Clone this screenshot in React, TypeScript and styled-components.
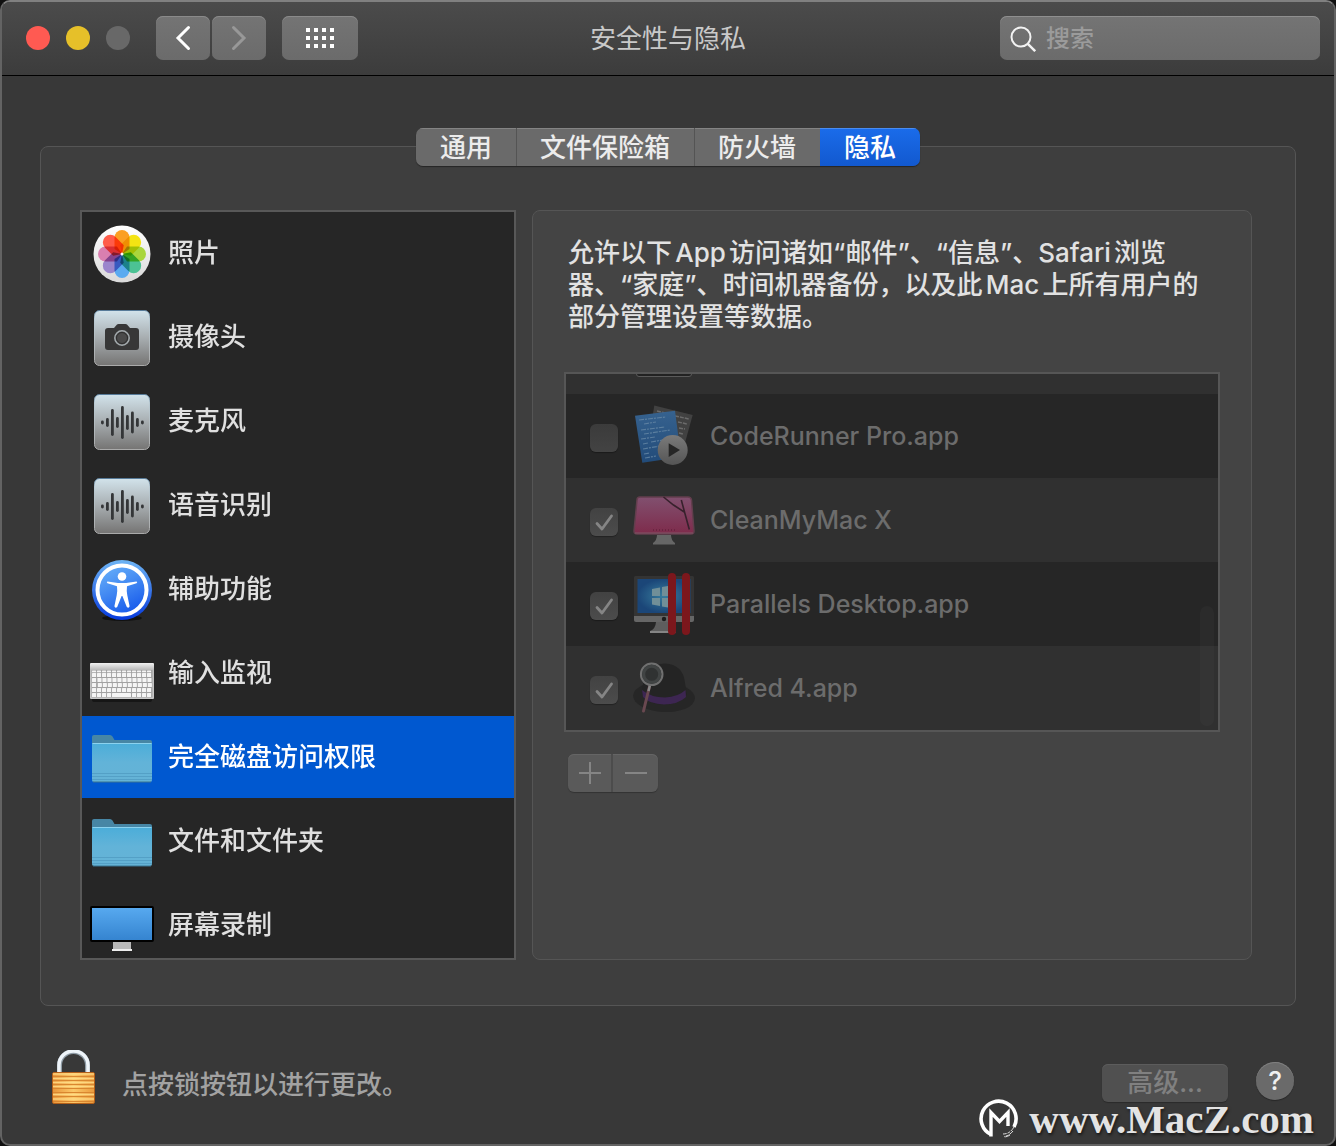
import React from "react";
import styled, { createGlobalStyle } from "styled-components";

const GlobalStyle = createGlobalStyle`
  *, *::before, *::after { box-sizing: border-box; }
  html, body { margin: 0; background: #101010; }
  body, button, input {
    font-family: Inter, "Noto Sans CJK SC", sans-serif;
    font-size: 26px;
    font-weight: 500;
    line-height: 32px;
  }
  button { margin: 0; padding: 0; border: 0; background: none; color: inherit; cursor: default; }
  ul { margin: 0; padding: 0; list-style: none; }
  svg { display: block; flex: none; }
`;

const Window = styled.div`
  position: relative;
  display: flex;
  flex-direction: column;
  height: 100vh;
  min-height: 900px;
  min-width: 1100px;
  border: 2px solid #636363;
  border-top-color: #808080;
  border-radius: 10px;
  background: #383838;
  color: #e2e2e2;
  overflow: hidden;
`;

const TitleBar = styled.header`
  display: grid;
  grid-template-columns: 1fr auto 1fr;
  align-items: center;
  padding: 14px 14px 15px;
  border-bottom: 1px solid #000;
  background: linear-gradient(#4b4b4b, #3c3c3c);
`;

const ToolGroup = styled.div`
  display: flex;
  align-items: center;
`;

const Lights = styled.div`
  display: flex;
  gap: 16px;
  margin: 0 26px 0 10px;
`;

const Light = styled.button<{ $color: string }>`
  width: 24px;
  height: 24px;
  border-radius: 50%;
  background: ${(p) => p.$color};
`;

const ToolButton = styled.button<{ $wide?: boolean }>`
  display: grid;
  place-items: center;
  width: ${(p) => (p.$wide ? 76 : 54)}px;
  height: 44px;
  margin-left: ${(p) => (p.$wide ? 16 : 0)}px;
  margin-right: ${(p) => (p.$wide ? 0 : 2)}px;
  border-radius: 7px;
  background: linear-gradient(#747474, #6b6b6b);
  box-shadow: inset 0 1px 0 #8a8a8a;
  &:nth-of-type(2) { margin-right: 0; }
`;

const Title = styled.h1`
  margin: 0;
  padding-top: 2px;
  font-size: 26px;
  font-weight: 400;
  line-height: 32px;
  color: #c9c9c9;
`;

const Search = styled.label`
  justify-self: end;
  display: flex;
  align-items: center;
  gap: 10px;
  width: 320px;
  height: 44px;
  padding: 2px 10px 0;
  border-radius: 7px;
  background: linear-gradient(#747474, #6b6b6b);
  box-shadow: inset 0 1px 0 #8f8f8f;
`;

const SearchInput = styled.input`
  flex: 1;
  min-width: 0;
  padding: 0;
  border: 0;
  outline: 0;
  background: none;
  color: #eee;
  font-size: 24px;
  &::placeholder { color: #9b9b9b; opacity: 1; }
`;

const Main = styled.main`
  flex: 1;
  min-height: 0;
  display: flex;
  flex-direction: column;
  padding: 52px 38px 0;
`;

const Tabs = styled.div`
  position: relative;
  align-self: center;
  display: flex;
  margin-bottom: -20px;
  border-radius: 7px;
  box-shadow: 0 1px 1px rgba(0, 0, 0, 0.4);
  overflow: hidden;
`;

const Tab = styled.button<{ $active?: boolean; $divided?: boolean }>`
  height: 38px;
  padding: 2px 24px 0;
  color: ${(p) => (p.$active ? "#fff" : "#ececec")};
  background: ${(p) => (p.$active ? "linear-gradient(#1a6cea, #1259cf)" : "#6a6a6a")};
  box-shadow: ${(p) => (p.$divided ? "inset 1px 0 0 #545454, " : "")}inset 0 1px 0 ${(p) => (p.$active ? "#4a8cf0" : "#848484")};
`;

const Box = styled.section`
  flex: 1;
  min-height: 0;
  display: grid;
  grid-template-columns: 436px 1fr;
  gap: 16px;
  padding: 63px 43px 45px 39px;
  border: 1px solid #555;
  border-radius: 8px;
  background: #3e3e3e;
`;

const Sidebar = styled.ul`
  display: flex;
  flex-direction: column;
  gap: 2px;
  min-height: 0;
  border: 2px solid #585858;
  background: #262626;
  overflow-y: auto;
  scrollbar-width: none;
`;

const Category = styled.button<{ $selected?: boolean }>`
  display: flex;
  align-items: center;
  gap: 14px;
  width: 100%;
  height: 82px;
  padding: 2px 8px 0;
  text-align: left;
  color: ${(p) => (p.$selected ? "#fff" : "#e0e0e0")};
  background: ${(p) => (p.$selected ? "#0058d0" : "transparent")};
`;

const CategoryName = styled.span`
  padding-bottom: 2px;
`;

const Pane = styled.section`
  min-width: 0;
  padding: 26px 31px;
  border: 1px solid #555;
  border-radius: 8px;
  background: #444;
`;

const Description = styled.p`
  margin: 0 0 39px;
  padding: 0 4px;
  text-autospace: normal;
`;

const AppList = styled.ul`
  position: relative;
  border: 2px solid #565656;
  background: #303030;
`;

const PeekRow = styled.li`
  height: 20px;
  padding-left: 66px;
`;

const AppRow = styled.li`
  height: 84px;
  &:nth-child(even) { background: #262626; }
`;

const AppLabel = styled.label`
  display: flex;
  align-items: center;
  height: 84px;
  padding-left: 24px;
  color: #6c6c6c;
`;

const CheckWrap = styled.span`
  display: grid;
  width: 28px;
  height: 28px;
  margin: 4px 14px 0 0;
  & > * { grid-area: 1 / 1; }
`;

const CheckInput = styled.input`
  appearance: none;
  width: 28px;
  height: 28px;
  margin: 0;
  border-radius: 6px;
  background: linear-gradient(#3b3b3b, #434343);
  box-shadow: 0 1px 1px rgba(0, 0, 0, 0.3);
  &:checked { background: linear-gradient(#424242, #4c4c4c); }
`;

const AppName = styled.span`
  margin-left: 14px;
  font-size: 25px;
`;

const Thumb = styled.div`
  position: absolute;
  right: 4px;
  bottom: 4px;
  width: 14px;
  height: 120px;
  border-radius: 7px;
  background: rgba(255, 255, 255, 0.025);
`;

const EditButtons = styled.div`
  display: inline-flex;
  margin: 22px 0 0 4px;
  border-radius: 6px;
  background: #5a5a5a;
  box-shadow: inset 0 1px 0 #656565, 0 1px 1px rgba(0, 0, 0, 0.25);
`;

const EditButton = styled.button`
  display: grid;
  place-items: center;
  width: 45px;
  height: 38px;
  &:first-child { border-right: 2px solid #4c4c4c; }
`;

const Footer = styled.footer`
  display: flex;
  align-items: center;
  padding: 44px 38px 28px 48px;
  color: #a2a2a2;
`;

const LockHint = styled.span`
  flex: 1;
  margin-left: 22px;
  padding-top: 4px;
`;

const Advanced = styled.button`
  width: 126px;
  height: 38px;
  border-radius: 6px;
  color: #808080;
  background: #505050;
  box-shadow: inset 0 1px 0 #5c5c5c, 0 1px 1px rgba(0, 0, 0, 0.25);
`;

const Help = styled.button`
  display: grid;
  place-items: center;
  width: 38px;
  height: 38px;
  margin: 0 2px 4px 28px;
  border-radius: 50%;
  color: #f0f0f0;
  background: #6a6a6a;
  box-shadow: inset 0 1px 0 #808080, 0 1px 1px rgba(0, 0, 0, 0.3);
`;

const Watermark = styled.div`
  position: absolute;
  right: 20px;
  bottom: 2px;
  display: flex;
  align-items: center;
  gap: 10px;
  color: #e3e3e3;
  font: 700 41px/46px "Liberation Serif", serif;
  text-shadow: 1px 2px 3px rgba(0, 0, 0, 0.6);
  pointer-events: none;
`;

const Icon64 = ({ children }: { children: React.ReactNode }) => (
  <svg width="64" height="64" viewBox="0 0 64 64" fill="none" aria-hidden="true">{children}</svg>
);

const petals = ["#fb9f22", "#f4e413", "#a9d63c", "#4cc294", "#5aaaf0", "#9b86cc", "#d97fb0", "#ff5c4a"];

const PhotosIcon = () => (
  <Icon64>
    <defs>
      <linearGradient id="photoBg" x1="0" y1="0" x2="0" y2="1">
        <stop stopColor="#fff" /><stop offset="1" stopColor="#d9d9d9" />
      </linearGradient>
    </defs>
    <circle cx="32" cy="32" r="28.5" fill="url(#photoBg)" />
    <g style={{ isolation: "isolate" }}>
      {petals.map((c, i) => (
        <path key={c} d="M24.500 27V15.500a7.500 7.500 0 0 1 15 0V27L32 32Z" fill={c}
          transform={`rotate(${i * 45} 32 32)`} style={{ mixBlendMode: "multiply" }} />
      ))}
    </g>
    <circle cx="32" cy="32" r="1.5" fill="#fff" />
  </Icon64>
);

const Plate = () => (
  <>
    <defs>
      <linearGradient id="plate" x1="0" y1="0" x2="0" y2="1">
        <stop stopColor="#d2e3eb" /><stop offset=".5" stopColor="#a7adb0" /><stop offset="1" stopColor="#757473" />
      </linearGradient>
      <linearGradient id="plateEdge" x1="0" y1="0" x2="0" y2="1">
        <stop stopColor="#577b99" /><stop offset=".15" stopColor="#b9cad3" /><stop offset="1" stopColor="#aaa" />
      </linearGradient>
    </defs>
    <rect x="4.5" y="4.5" width="55" height="55" rx="5" fill="url(#plate)" stroke="url(#plateEdge)" />
  </>
);

const CameraIcon = () => (
  <Icon64>
    <Plate />
    <path d="M18 22h6l3-3.5q.5-.5 1.500-.5h7q1 0 1.500.5L40 22h6a3 3 0 0 1 3 3v16a3 3 0 0 1-3 3H18a3 3 0 0 1-3-3V25a3 3 0 0 1 3-3Z" fill="#373737" />
    <circle cx="32" cy="32" r="7.200" fill="#4a4a4a" stroke="#a3aaad" strokeWidth="1.500" />
    <circle cx="32" cy="32" r="5.500" stroke="#2c2c2c" strokeWidth="1" />
  </Icon64>
);

const bars = [4, 9, 27, 11, 33, 15, 22, 9, 4];

const VoiceIcon = () => (
  <Icon64>
    <Plate />
    {bars.map((h, i) => (
      <rect key={i} x={11 + i * 5} y={32.5 - h / 2} width="2.800" height={h} rx="1.400" fill="#343638" />
    ))}
  </Icon64>
);

const AccessIcon = () => (
  <Icon64>
    <defs>
      <linearGradient id="acc" x1="0" y1="0" x2=".5" y2="1">
        <stop stopColor="#6db5fa" /><stop offset=".5" stopColor="#468df3" /><stop offset="1" stopColor="#1c5fec" />
      </linearGradient>
      <linearGradient id="accRim" x1="0" y1="0" x2="0" y2="1">
        <stop stopColor="#6eb5f5" /><stop offset="1" stopColor="#0639dc" />
      </linearGradient>
    </defs>
    <ellipse cx="32" cy="60" rx="20" ry="3" fill="#111" />
    <circle cx="32" cy="32" r="30" fill="url(#accRim)" />
    <circle cx="32" cy="32" r="24.500" fill="url(#acc)" stroke="#fff" strokeWidth="4" />
    <circle cx="32" cy="18.500" r="4.300" fill="#fff" />
    <path d="M17.500 23.500 28 25h8l10.500-1.500q1.500.6 0 1.800L37 28.300q-.6 4 .3 9l2.300 11q-.6 2.200-2.800.8L32.400 38h-.8L27.200 49.100q-2.200 1.400-2.800-.8l2.300-11q.9-5 .3-9L17.500 25.300q-1.500-1.200 0-1.800Z" fill="#fff" />
  </Icon64>
);

const KeyboardIcon = () => (
  <Icon64>
    <defs>
      <linearGradient id="kb" x1="0" y1="0" x2="0" y2="1">
        <stop stopColor="#f2f2f2" /><stop offset=".18" stopColor="#bdbdbd" /><stop offset="1" stopColor="#c9c9c9" />
      </linearGradient>
    </defs>
    <rect x="2" y="55" width="60" height="5" rx="2" fill="#161616" />
    <rect x="0" y="21" width="64" height="36" rx="1" fill="url(#kb)" />
    <rect x="1.500" y="28" width="61" height="27.500" fill="#a2a2a2" />
    {[0, 1, 2, 3, 4, 5].map((r) =>
      Array.from({ length: 12 }, (_, c) => {
        if (r === 5 && c > 4 && c < 8) return null;
        const space = r === 5 && c === 4;
        return (
          <rect key={`${r}-${c}`} x={2 + c * 5 + (r === 2 ? 0.8 : r === 3 ? 1.6 : 0) * (c ? 0.5 : 0)} y={r === 0 ? 28.5 : 26 + r * 5}
            width={space ? 19 : 4.1} height={r === 0 ? 1.8 : 3.9} rx=".5" fill="#f5f5f5" />
        );
      })
    )}
  </Icon64>
);

const FolderIcon = () => (
  <Icon64>
    <defs>
      <linearGradient id="fold" x1="0" y1="0" x2="0" y2="1">
        <stop stopColor="#4badd9" /><stop offset=".5" stopColor="#62b3d8" /><stop offset="1" stopColor="#65b3d6" />
      </linearGradient>
    </defs>
    <path d="M2 20V11q0-2 2-2h16q1.500 0 2.500 1.500L24.500 14H60q2 0 2 2v5Z" fill="#4786a5" />
    <path d="M2 18q0-1 1-1h58q1 0 1 1v36q0 2-2 2H4q-2 0-2-2Z" fill="url(#fold)" />
    <path d="M2.500 17.500h59" stroke="#8bd2ef" />
    <path d="M2 47.500h60M2 50.500h60M2 53.500h60" stroke="#4d99bf" strokeOpacity=".7" />
    <path d="M3 56h58" stroke="#387391" />
  </Icon64>
);

const ScreenIcon = () => (
  <Icon64>
    <defs>
      <linearGradient id="scr" x1="0" y1="0" x2="0" y2="1">
        <stop stopColor="#58aaf0" /><stop offset="1" stopColor="#3483cf" />
      </linearGradient>
    </defs>
    <path d="M23 48h18v7H23z" fill="#b9b9b9" />
    <path d="M22 55h20v2H22z" fill="#eee" />
    <rect x="1" y="13" width="62" height="34" rx="1" fill="url(#scr)" stroke="#000" strokeWidth="2" />
  </Icon64>
);

const CodeRunnerIcon = () => (
  <Icon64>
    <defs>
      <linearGradient id="sheet" x1="0" y1="0" x2="0" y2="1">
        <stop stopColor="#36628f" /><stop offset="1" stopColor="#224b79" />
      </linearGradient>
      <linearGradient id="play" x1="0" y1="0" x2="0" y2="1">
        <stop stopColor="#7a7a7a" /><stop offset="1" stopColor="#555" />
      </linearGradient>
    </defs>
    <path d="M22.300 1.500 60.700 11 51 46 16 40Z" fill="#414141" />
    <path d="m25 7 13 3m5 2 14 3m-11 3 9 2m-8 4 6 1m-6 4 4 1" stroke="#6b6b6b" strokeWidth="1.500" strokeDasharray="4 1" />
    <path d="M3 11.700 43 6.700 49 53 10.300 58.700Z" fill="url(#sheet)" />
    <path d="m7 16 27-3M12 20l12-2M9 26l24-3M12 30l26-4M9 35l14-2M11 40l5-1m3-1 12-2M11 45l17-3M12 50l6-1m-5 5 11-2" stroke="#6587a5" strokeWidth="1.200" strokeOpacity=".8" strokeDasharray="5 1 2 1" />
    <circle cx="40.700" cy="46" r="15" fill="url(#play)" />
    <path d="M36.700 39.300v13.700L48 46Z" fill="#262626" />
  </Icon64>
);

const CleanIcon = () => (
  <Icon64>
    <defs>
      <linearGradient id="pink" x1="0" y1="0" x2="0" y2="1">
        <stop stopColor="#81506f" /><stop offset="1" stopColor="#7e2b4b" />
      </linearGradient>
    </defs>
    <path d="M25 47h14q0 5 4 8v1.500H21V55q4-3 4-8Z" fill="#666" />
    <path d="M8 9h48q3 0 3.500 3L62 43q0 3-3 3H5q-3 0-3-3L5 12q0-3 3-3Z" fill="url(#pink)" stroke="#633e4d" strokeWidth="1.500" />
    <path d="M3 45h58" stroke="#805868" />
    <path d="m31.500 9 10 8 11.500 7.500M49.300 12l3.500 13 4.500 16.500" stroke="#37212c" strokeWidth="1.600" />
    <path d="M21 42h22" stroke="#561b35" strokeDasharray="1 2" />
  </Icon64>
);

const ParallelsIcon = () => (
  <Icon64>
    <defs>
      <radialGradient id="win"><stop stopColor="#397e9e" /><stop offset="1" stopColor="#1b4678" /></radialGradient>
    </defs>
    <path d="M24 50h16q0 5 4 8v3H18v-2q5.500-2 6-9Z" fill="#5e5e5e" />
    <path d="M18 60h24" stroke="#858585" strokeWidth="2" />
    <rect x="2" y="4" width="60" height="45.500" rx="1.500" fill="#343434" />
    <path d="M2 44h60v4q0 2-2 2H4q-2 0-2-2Z" fill="#666" />
    <rect x="5.500" y="7" width="53" height="34" fill="url(#win)" />
    <circle cx="32" cy="47" r="2.200" fill="#1c1c1c" />
    <path d="m20 17 8-1.500v8.500h-8ZM30 15l9-1.500V24h-9ZM20 26h8v8l-8-1.500ZM30 26h9v10l-9-1.500Z" fill="#718f98" />
    <rect x="36" y="1" width="8" height="62" rx="4" fill="#7c171c" />
    <rect x="50" y="1" width="8" height="62" rx="4" fill="#7c171c" />
  </Icon64>
);

const AlfredIcon = () => (
  <Icon64>
    <ellipse cx="32" cy="41" rx="31" ry="15" fill="#262626" transform="rotate(3 32 41)" />
    <path d="M10 37Q11 8 33 7.500q18 1 20 19l2 12q-8 10-24 10-15 0-21-11Z" fill="#242424" />
    <path d="M10 34q9 7.500 23 7.500Q46 41 53.500 34l.5 7q-8 7.500-22 7.500Q17 48 11 41Z" fill="#3d2652" />
    <path d="M17.500 30.500 11.500 55" stroke="#694850" strokeWidth="3" strokeLinecap="round" />
    <path d="m18 29-1.500 6" stroke="#888" strokeWidth="2.500" />
    <circle cx="19.700" cy="18.300" r="10.800" fill="#393b3b" stroke="#707070" strokeWidth="2" />
    <circle cx="19.700" cy="18.300" r="8" fill="#303232" stroke="#414444" strokeWidth="3" />
  </Icon64>
);

const LockIcon = () => (
  <svg width="50" height="66" viewBox="0 0 50 66" fill="none" aria-hidden="true">
    <defs>
      <linearGradient id="brass" x1="0" y1="0" x2="1" y2="0">
        <stop stopColor="#e9963a" /><stop offset=".5" stopColor="#fbc868" /><stop offset="1" stopColor="#ea9a3c" />
      </linearGradient>
    </defs>
    <path d="M9.500 24V15.500a14 14 0 0 1 28 0V24" stroke="#8e9ba5" strokeWidth="5" />
    <path d="M9 24V15a14.500 14 0 0 1 29 0V24" stroke="#eef4f9" strokeWidth="3.500" />
    <rect x="2.500" y="22.500" width="42" height="31" rx="1.500" fill="url(#brass)" stroke="#b4601a" />
    <path d="M3 24h41M3 28.500h41M3 32.500h41M3 36.500h41M3 44.500h41M3 49h41" stroke="#ffe08c" strokeWidth="1.300" strokeOpacity=".8" />
    <path d="M3 26.500h41M3 30.500h41M3 34.500h41M3 38.500h41M3 42.500h41M3 46.500h41M3 51.500h41" stroke="#d98630" strokeWidth="1.100" />
  </svg>
);

const MacZLogo = () => (
  <svg width="40" height="40" viewBox="0 0 40 40" fill="none" aria-hidden="true">
    <path d="M12 35.500A17.500 17.500 0 1 1 35 28" stroke="#fff" strokeWidth="3.600" />
    <path d="M12 37.500V13.500l8.500 9 8.500-9V27" stroke="#fff" strokeWidth="3.400" />
    <path d="M35 28q-4 7-11 7M34 32q-4 5-9 5.500M31 36q-3 2-6 2" stroke="#ddd" strokeWidth="1" strokeDasharray="5 1 3 1" />
  </svg>
);

const categories = [
  { name: "照片", Icon: PhotosIcon },
  { name: "摄像头", Icon: CameraIcon },
  { name: "麦克风", Icon: VoiceIcon },
  { name: "语音识别", Icon: VoiceIcon },
  { name: "辅助功能", Icon: AccessIcon },
  { name: "输入监视", Icon: KeyboardIcon },
  { name: "完全磁盘访问权限", Icon: FolderIcon, selected: true },
  { name: "文件和文件夹", Icon: FolderIcon },
  { name: "屏幕录制", Icon: ScreenIcon },
];

const apps = [
  { name: "CodeRunner Pro.app", Icon: CodeRunnerIcon, on: false },
  { name: "CleanMyMac X", Icon: CleanIcon, on: true },
  { name: "Parallels Desktop.app", Icon: ParallelsIcon, on: true },
  { name: "Alfred 4.app", Icon: AlfredIcon, on: true },
];

const tabs = ["通用", "文件保险箱", "防火墙", "隐私"];

export default function App() {
  return (
    <>
      <GlobalStyle />
      <Window>
        <TitleBar>
          <ToolGroup>
            <Lights>
              <Light $color="#ff5a52" />
              <Light $color="#e6c029" />
              <Light $color="#686868" />
            </Lights>
            <ToolButton>
              <svg width="16" height="26" viewBox="0 0 16 26" fill="none">
                <path d="M13.500 2.500 3 13l10.500 10.500" stroke="#fff" strokeWidth="3" strokeLinecap="round" />
              </svg>
            </ToolButton>
            <ToolButton disabled>
              <svg width="16" height="26" viewBox="0 0 16 26" fill="none">
                <path d="M2.500 2.500 13 13 2.500 23.500" stroke="#989898" strokeWidth="3" strokeLinecap="round" />
              </svg>
            </ToolButton>
            <ToolButton $wide>
              <svg width="28" height="20" viewBox="0 0 28 20" fill="#fff">
                {[0, 8, 16].map((y) => [0, 8, 16, 24].map((x) => <rect key={`${x}-${y}`} x={x} y={y} width="4" height="4" />))}
              </svg>
            </ToolButton>
          </ToolGroup>
          <Title>安全性与隐私</Title>
          <Search>
            <svg width="26" height="26" viewBox="0 0 26 26" fill="none" stroke="#f2f2f2" strokeWidth="2">
              <circle cx="11" cy="11" r="9.500" />
              <path d="m17.800 17.800 7.400 7.400" strokeWidth="2.400" />
            </svg>
            <SearchInput type="search" placeholder="搜索" />
          </Search>
        </TitleBar>

        <Main>
          <Tabs role="tablist">
            {tabs.map((t, i) => (
              <Tab key={t} role="tab" aria-selected={i === 3} $active={i === 3} $divided={i === 1 || i === 2}>{t}</Tab>
            ))}
          </Tabs>
          <Box>
            <Sidebar>
              {categories.map(({ name, Icon, selected }) => (
                <li key={name}>
                  <Category $selected={selected}>
                    <Icon />
                    <CategoryName>{name}</CategoryName>
                  </Category>
                </li>
              ))}
            </Sidebar>
            <Pane>
              <Description>
                允许以下App访问诸如“邮件”、“信息”、Safari浏览器、“家庭”、时间机器备份，以及此Mac上所有用户的部分管理设置等数据。
              </Description>
              <AppList>
                <PeekRow>
                  <svg width="64" height="20" viewBox="0 0 64 20" fill="none">
                    <path d="M4.500 0q0 2.500 2.500 2.500h50q2.500 0 2.500-2.500" fill="#222" stroke="#5a5a5a" />
                  </svg>
                </PeekRow>
                {apps.map(({ name, Icon, on }) => (
                  <AppRow key={name}>
                    <AppLabel>
                      <CheckWrap>
                        <CheckInput type="checkbox" defaultChecked={on} disabled />
                        {on && (
                          <svg width="28" height="28" viewBox="0 0 28 28" fill="none">
                            <path d="m7 15.500 5 5.500L21.500 8" stroke="#858585" strokeWidth="2.800" strokeLinecap="round" strokeLinejoin="round" />
                          </svg>
                        )}
                      </CheckWrap>
                      <Icon />
                      <AppName>{name}</AppName>
                    </AppLabel>
                  </AppRow>
                ))}
                <Thumb />
              </AppList>
              <EditButtons>
                <EditButton disabled aria-label="添加">
                  <svg width="22" height="22" viewBox="0 0 22 22"><path d="M11 0v22M0 11h22" stroke="#858585" strokeWidth="2" /></svg>
                </EditButton>
                <EditButton disabled aria-label="移除">
                  <svg width="22" height="22" viewBox="0 0 22 22"><path d="M0 11h22" stroke="#858585" strokeWidth="2" /></svg>
                </EditButton>
              </EditButtons>
            </Pane>
          </Box>
        </Main>

        <Footer>
          <button aria-label="锁"><LockIcon /></button>
          <LockHint>点按锁按钮以进行更改。</LockHint>
          <Advanced disabled>高级...</Advanced>
          <Help>?</Help>
        </Footer>

        <Watermark>
          <MacZLogo />
          <span>www.MacZ.com</span>
        </Watermark>
      </Window>
    </>
  );
}
